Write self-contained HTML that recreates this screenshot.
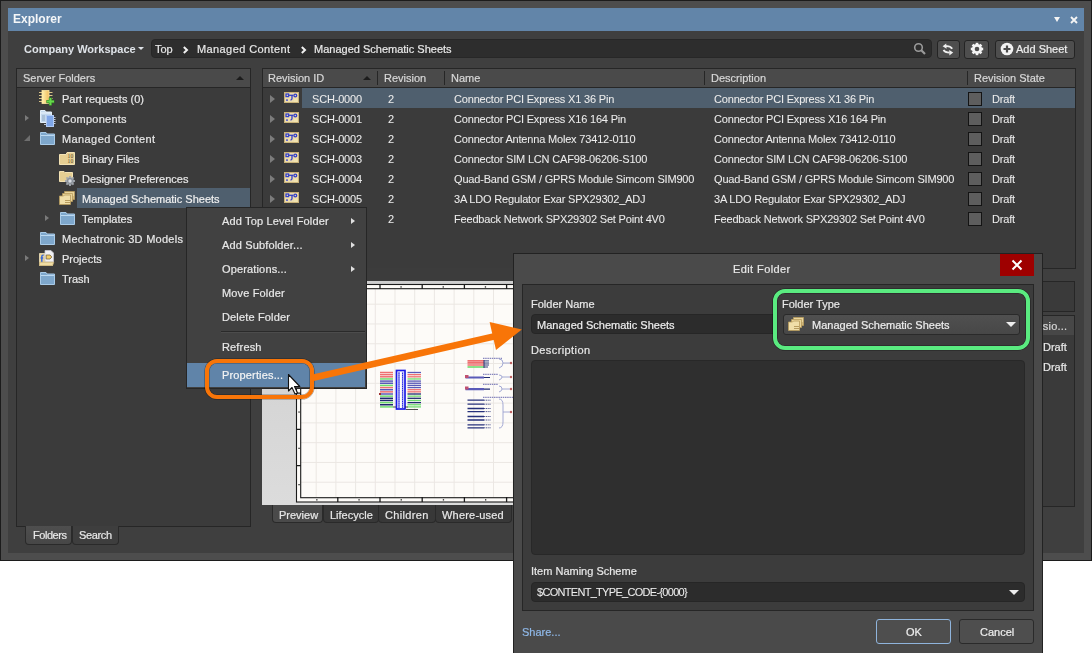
<!DOCTYPE html>
<html><head><meta charset="utf-8">
<style>
*{box-sizing:border-box;margin:0;padding:0}
html,body{width:1092px;height:653px;overflow:hidden;background:#fff;font-family:"Liberation Sans",sans-serif;position:relative}
.a{position:absolute}
.t{position:absolute;white-space:nowrap;color:#e8e8e8;font-size:11px;line-height:14px;-webkit-text-stroke:0.2px currentColor;will-change:transform}
.n{letter-spacing:-0.18px;-webkit-text-stroke:0.05px currentColor;color:#ececec}
#win{left:0;top:0;width:1092px;height:561px;background:#4d4d4d;border:1px solid #1c1c1c}
#title{left:8px;top:8px;width:1076px;height:23px;background:#6285a9}
#content{left:8px;top:31px;width:1076px;height:522px;background:#3f3f3f}
.panel{background:#3b3b3b;border:1px solid #262626}
.hdr{background:#4a4a4a;border-bottom:1px solid #262626}
.btn{background:#4e4e4e;border:1px solid #242424;border-radius:3px}
.sep{position:absolute;width:1px;height:14px;background:#262626;top:71px}
.exp{position:absolute;width:0;height:0;border-top:3px solid transparent;border-bottom:3px solid transparent;border-left:4px solid #7a7a7a}
.chk{position:absolute;width:14px;height:14px;background:#5e5e5e;border:1.5px solid #141414}
</style></head><body>
<div id="win" class="a"></div>
<div id="title" class="a"></div>
<div class="t" style="left:13px;top:12px;font-weight:bold;font-size:12px;color:#f4f6f8;-webkit-text-stroke:0">Explorer</div>
<div class="a" style="left:1054px;top:17px;width:0;height:0;border-left:3.5px solid transparent;border-right:3.5px solid transparent;border-top:5px solid #f4f4f4"></div>
<svg class="a" style="left:1069.5px;top:15.5px" width="8" height="8"><path d="M1 1L7 7M7 1L1 7" stroke="#f4f4f4" stroke-width="1.9"/></svg>
<div id="content" class="a"></div>

<!-- toolbar -->
<div class="t" style="left:24px;top:42px;font-weight:bold;color:#dfe3e8;-webkit-text-stroke:0">Company Workspace</div>
<div class="a" style="left:138px;top:47px;width:0;height:0;border-left:3px solid transparent;border-right:3px solid transparent;border-top:3px solid #dfe3e8"></div>
<div class="a" style="left:151px;top:39px;width:781px;height:19px;background:#2d2d2d;border:1px solid #272727;border-radius:4px"></div>
<div class="t" style="left:155px;top:42px">Top</div>
<svg class="a" style="left:182px;top:46px" width="7" height="8"><path d="M1.8 1L5 4L1.8 7" stroke="#f0f0f0" stroke-width="2" fill="none"/></svg>
<div class="t" style="left:197px;top:42px;letter-spacing:0.4px">Managed Content</div>
<svg class="a" style="left:300px;top:46px" width="7" height="8"><path d="M1.8 1L5 4L1.8 7" stroke="#f0f0f0" stroke-width="2" fill="none"/></svg>
<div class="t" style="left:314px;top:42px">Managed Schematic Sheets</div>
<svg class="a" style="left:913px;top:42px" width="14" height="14"><circle cx="5.5" cy="5.5" r="3.8" stroke="#9a9a9a" stroke-width="1.6" fill="none"/><path d="M8.3 8.3L12 12" stroke="#9a9a9a" stroke-width="2.2"/></svg>
<div class="a btn" style="left:937px;top:40px;width:23px;height:19px"></div>
<svg class="a" style="left:941px;top:42px" width="14" height="14"><path d="M4.5 4.2Q9 3.6 11.2 6.8" stroke="#f0f0f0" stroke-width="1.9" fill="none"/><path d="M1.6 4.2L5.2 1.4L5.6 6.8Z" fill="#f0f0f0"/><path d="M2.6 7.8Q3.8 10.4 8.6 10.6" stroke="#f0f0f0" stroke-width="1.9" fill="none"/><path d="M12.2 10.6L8.4 13.4L8.2 8Z" fill="#f0f0f0"/></svg>
<div class="a btn" style="left:964px;top:40px;width:25px;height:19px"></div>
<svg class="a" style="left:970px;top:42px" width="14" height="14"><g fill="#f4f4f4"><circle cx="7" cy="7" r="5.1"/><rect x="5.7" y="0.8" width="2.6" height="12.4" transform="rotate(0 7 7)"/><rect x="5.7" y="0.8" width="2.6" height="12.4" transform="rotate(45 7 7)"/><rect x="5.7" y="0.8" width="2.6" height="12.4" transform="rotate(90 7 7)"/><rect x="5.7" y="0.8" width="2.6" height="12.4" transform="rotate(135 7 7)"/></g><circle cx="7" cy="7" r="2.3" fill="#4e4e4e"/></svg>
<div class="a btn" style="left:995px;top:40px;width:80px;height:19px"></div>
<svg class="a" style="left:1000px;top:42px" width="14" height="14"><circle cx="7" cy="7" r="6.3" fill="#f2f2f2"/><path d="M7 3.5V10.5M3.5 7H10.5" stroke="#4b4b4b" stroke-width="2.2"/></svg>
<div class="t" style="left:1016px;top:42px;color:#eee">Add Sheet</div>

<!-- left panel -->
<div class="a panel" style="left:16px;top:68px;width:235px;height:459px"></div>
<div class="a hdr" style="left:17px;top:69px;width:233px;height:19px"></div>
<div class="t" style="left:23px;top:71px;color:#d8d8d8">Server Folders</div>
<div class="a" style="left:236px;top:76px;width:0;height:0;border-left:4px solid transparent;border-right:4px solid transparent;border-bottom:4px solid #1c1c1c"></div>

<svg width="0" height="0" style="position:absolute">
<defs>
<symbol id="ifold" viewBox="0 0 15 13"><path d="M0.5 0.5H6L7 2H14.5V12.5H0.5Z" fill="#7ea7cc" stroke="#a9cbe8"/><path d="M1 3.5H14" stroke="#bcd8f0"/></symbol>
<symbol id="itan" viewBox="0 0 16 14"><path d="M0.5 2.5H5.5L6.5 1H15.5V13.5H0.5Z" fill="#e6cf93" stroke="#f3e2b4"/></symbol>
<symbol id="ibin" viewBox="0 0 16 14"><path d="M0.5 3.5H7L8 1.5H15.5V13.5H0.5Z" fill="#e6cf93" stroke="#f3e2b4"/><text x="8.6" y="7" font-size="5.6" fill="#5a4828" font-family="Liberation Serif">10</text><text x="8.6" y="12.2" font-size="5.6" fill="#5a4828" font-family="Liberation Serif">10</text></symbol>
<symbol id="ipref" viewBox="0 0 16 16"><path d="M0.5 1.5H5L6 2.5H13.5V11.5H0.5Z" fill="#e6cf93" stroke="#f3e2b4"/><g fill="#a4a9b0"><rect x="10.1" y="6" width="1.8" height="10" transform="rotate(0 11 11)"/><rect x="10.1" y="6" width="1.8" height="10" transform="rotate(45 11 11)"/><rect x="10.1" y="6" width="1.8" height="10" transform="rotate(90 11 11)"/><rect x="10.1" y="6" width="1.8" height="10" transform="rotate(135 11 11)"/><circle cx="11" cy="11" r="3.8"/></g><circle cx="11" cy="11" r="3" fill="#8a9098"/><circle cx="11" cy="11" r="1.7" fill="#d8dce2"/></symbol>
<symbol id="isch" viewBox="0 0 16 14"><path d="M5.5 0.5H15.5V8.5H5.5Z" fill="#ead59c" stroke="#b89c5c" stroke-width="0.8"/><path d="M3.5 2.5H13.5V10.5H3.5Z" fill="#ead59c" stroke="#b89c5c" stroke-width="0.8"/><path d="M0.5 5H4.5L5.5 4H11.5V13.5H0.5Z" fill="#f0dea8" stroke="#b89c5c" stroke-width="0.8"/><path d="M6 9.5H11M6 11.5H11M13.5 6H15M13.5 8H15" stroke="#a88c4c" stroke-width="0.8"/></symbol>
<symbol id="ipart" viewBox="0 0 17 17" overflow="visible"><defs><linearGradient id="pgr" x1="0" x2="1"><stop offset="0" stop-color="#fff2b0"/><stop offset="1" stop-color="#f0bd5c"/></linearGradient></defs><path d="M1 2.5H4M1 5.5H4M1 8.5H4M1 11.5H4M11 2.5H14.5M11 5.5H14.5M11 8.5H14.5M11 11.5H14.5" stroke="#d9c48a" stroke-width="1"/><rect x="4" y="0.5" width="7" height="13" fill="url(#pgr)" stroke="#fde7a0" stroke-width="0.8"/><path d="M12.4 7.6V15.6M8.4 11.6H16.4" stroke="#2f7a20" stroke-width="3.2"/><path d="M12.4 8V15.2M8.8 11.6H16" stroke="#66d84c" stroke-width="2"/></symbol>
<symbol id="icomp" viewBox="0 0 16 17"><path d="M0.5 0.5H5L6 2H11.5V12.5H0.5Z" fill="#c4d9ee" stroke="#e4f0fa"/><path d="M1 3H11" stroke="#eef6fc"/><path d="M2 6H5M2 8H5M2 10H5" stroke="#90a8c0"/><path d="M13.5 7.5H15.5M13.5 9.5H15.5M13.5 11.5H15.5M13.5 13.5H15.5M4 14.5H6.5" stroke="#d0d8e6" stroke-width="0.9"/><rect x="6.5" y="5.5" width="7" height="11" fill="#7fa6e8" stroke="#b0caf4"/></symbol>
<symbol id="iproj" viewBox="0 0 16 16"><path d="M0.5 3.5H13.5V15.5H0.5Z" fill="#e8d39a" stroke="#f2e4bc" stroke-width="0.8"/><path d="M6 0.5H12L14.5 3V12H6Z" fill="#f0f0f4" stroke="#c8c8d0" stroke-width="0.8"/><path d="M7.2 5H11L12.8 7L11 9H7.2Z" fill="#f2cf6a" stroke="#7a6440" stroke-width="0.8"/><path d="M4.6 5.2Q2.8 4.8 2.8 7V12.5M1.6 8H4.2" stroke="#3a68d8" stroke-width="1.5" fill="none"/><path d="M0.5 12.2H14.8L13.6 15.5H0.5Z" fill="#efdca4" stroke="#c9b27a" stroke-width="0.8"/></symbol>
<symbol id="ischrow" viewBox="0 0 15 11"><rect x="0.5" y="0.5" width="14" height="10" fill="#ecdcae" stroke="#c9b27a"/><g stroke="#3540c8" stroke-width="1.3" fill="none"><rect x="2" y="2" width="2.6" height="2.6"/><path d="M4.6 3.3H9.2"/><circle cx="11.3" cy="3.5" r="1.4"/><path d="M8 3.3V6.5Q8 8 6.5 8"/></g><rect x="2.2" y="7.3" width="1.6" height="1.6" fill="#3540c8"/><path d="M10 7.2H13M10 9H13" stroke="#f4e9b0" stroke-width="1"/></symbol>
</defs></svg>
<div class="a" style="left:77px;top:188px;width:173px;height:20px;background:#4f5f6e"></div>
<svg class="a" style="left:38px;top:90px" width="17" height="17" overflow="visible"><use href="#ipart"/></svg>
<div class="t" style="left:62px;top:92px">Part requests (0)</div>
<div class="exp" style="left:25px;top:115px"></div>
<svg class="a" style="left:40px;top:110px" width="16" height="17"><use href="#icomp"/></svg>
<div class="t" style="left:62px;top:112px;letter-spacing:0.25px">Components</div>
<div class="a" style="left:24px;top:135px;width:0;height:0;border-bottom:6px solid #6e6e6e;border-left:6px solid transparent"></div>
<svg class="a" style="left:40px;top:132px" width="15" height="13"><use href="#ifold"/></svg>
<div class="t" style="left:62px;top:132px;letter-spacing:0.4px">Managed Content</div>
<svg class="a" style="left:59px;top:151px" width="16" height="14"><use href="#ibin"/></svg>
<div class="t" style="left:82px;top:152px">Binary Files</div>
<svg class="a" style="left:59px;top:170px" width="16" height="16"><use href="#ipref"/></svg>
<div class="t" style="left:82px;top:172px">Designer Preferences</div>
<svg class="a" style="left:59px;top:191px" width="16" height="14"><use href="#isch"/></svg>
<div class="t" style="left:82px;top:192px;color:#f0f0f0">Managed Schematic Sheets</div>
<div class="exp" style="left:45px;top:215px"></div>
<svg class="a" style="left:60px;top:212px" width="15" height="13"><use href="#ifold"/></svg>
<div class="t" style="left:82px;top:212px">Templates</div>
<svg class="a" style="left:40px;top:232px" width="15" height="13"><use href="#ifold"/></svg>
<div class="t" style="left:62px;top:232px;letter-spacing:0.27px">Mechatronic 3D Models</div>
<div class="exp" style="left:25px;top:255px"></div>
<svg class="a" style="left:39px;top:250px" width="16" height="16"><use href="#iproj"/></svg>
<div class="t" style="left:62px;top:252px">Projects</div>
<svg class="a" style="left:40px;top:272px" width="15" height="13"><use href="#ifold"/></svg>
<div class="t" style="left:62px;top:272px">Trash</div>
<!-- tabs -->
<div class="a" style="left:25px;top:526px;width:47px;height:19px;background:linear-gradient(#4e4e4e,#474747);border:1px solid #2a2a2a;border-top:none;border-radius:0 0 4px 4px"></div>
<div class="a" style="left:72px;top:526px;width:47px;height:19px;background:#3e3e3e;border:1px solid #2a2a2a;border-top:none;border-radius:0 0 4px 4px"></div>
<div class="t" style="left:32.5px;top:528px;letter-spacing:-0.45px">Folders</div>
<div class="t" style="left:79px;top:528px;letter-spacing:-0.35px">Search</div>

<div class="a panel" style="left:262px;top:68px;width:814px;height:201px"></div>
<div class="a hdr" style="left:263px;top:69px;width:812px;height:19px"></div>
<div class="t" style="left:268px;top:71px;color:#d8d8d8">Revision ID</div>
<div class="a" style="left:363px;top:76px;width:0;height:0;border-left:4px solid transparent;border-right:4px solid transparent;border-bottom:4px solid #1c1c1c"></div>
<div class="sep" style="left:377px"></div>
<div class="t" style="left:384px;top:71px;color:#d8d8d8">Revision</div>
<div class="sep" style="left:444px"></div>
<div class="t" style="left:451px;top:71px;color:#d8d8d8">Name</div>
<div class="sep" style="left:704px"></div>
<div class="t" style="left:711px;top:71px;color:#d8d8d8">Description</div>
<div class="sep" style="left:967px"></div>
<div class="t" style="left:974px;top:71px;color:#d8d8d8">Revision State</div>
<div class="a" style="left:302px;top:88px;width:773px;height:20px;background:#4f5f6e"></div>
<div class="exp" style="left:270px;top:95px;border-left-color:#7c7c7c;border-top-width:4px;border-bottom-width:4px;border-left-width:5px"></div><svg class="a" style="left:284px;top:92px" width="15" height="11"><use href="#ischrow"/></svg><div class="t n" style="left:312px;top:92px">SCH-0000</div><div class="t n" style="left:388px;top:92px">2</div><div class="t n" style="left:454px;top:92px">Connector PCI Express X1 36 Pin</div><div class="t n" style="left:714px;top:92px">Connector PCI Express X1 36 Pin</div><div class="chk" style="left:968px;top:92px"></div><div class="t n" style="left:992px;top:92px">Draft</div>
<div class="exp" style="left:270px;top:115px;border-left-color:#7c7c7c;border-top-width:4px;border-bottom-width:4px;border-left-width:5px"></div><svg class="a" style="left:284px;top:112px" width="15" height="11"><use href="#ischrow"/></svg><div class="t n" style="left:312px;top:112px">SCH-0001</div><div class="t n" style="left:388px;top:112px">2</div><div class="t n" style="left:454px;top:112px">Connector PCI Express X16 164 Pin</div><div class="t n" style="left:714px;top:112px">Connector PCI Express X16 164 Pin</div><div class="chk" style="left:968px;top:112px"></div><div class="t n" style="left:992px;top:112px">Draft</div>
<div class="exp" style="left:270px;top:135px;border-left-color:#7c7c7c;border-top-width:4px;border-bottom-width:4px;border-left-width:5px"></div><svg class="a" style="left:284px;top:132px" width="15" height="11"><use href="#ischrow"/></svg><div class="t n" style="left:312px;top:132px">SCH-0002</div><div class="t n" style="left:388px;top:132px">2</div><div class="t n" style="left:454px;top:132px">Connector Antenna Molex 73412-0110</div><div class="t n" style="left:714px;top:132px">Connector Antenna Molex 73412-0110</div><div class="chk" style="left:968px;top:132px"></div><div class="t n" style="left:992px;top:132px">Draft</div>
<div class="exp" style="left:270px;top:155px;border-left-color:#7c7c7c;border-top-width:4px;border-bottom-width:4px;border-left-width:5px"></div><svg class="a" style="left:284px;top:152px" width="15" height="11"><use href="#ischrow"/></svg><div class="t n" style="left:312px;top:152px">SCH-0003</div><div class="t n" style="left:388px;top:152px">2</div><div class="t n" style="left:454px;top:152px">Connector SIM LCN CAF98-06206-S100</div><div class="t n" style="left:714px;top:152px">Connector SIM LCN CAF98-06206-S100</div><div class="chk" style="left:968px;top:152px"></div><div class="t n" style="left:992px;top:152px">Draft</div>
<div class="exp" style="left:270px;top:175px;border-left-color:#7c7c7c;border-top-width:4px;border-bottom-width:4px;border-left-width:5px"></div><svg class="a" style="left:284px;top:172px" width="15" height="11"><use href="#ischrow"/></svg><div class="t n" style="left:312px;top:172px">SCH-0004</div><div class="t n" style="left:388px;top:172px">2</div><div class="t n" style="left:454px;top:172px">Quad-Band GSM / GPRS Module Simcom SIM900</div><div class="t n" style="left:714px;top:172px">Quad-Band GSM / GPRS Module Simcom SIM900</div><div class="chk" style="left:968px;top:172px"></div><div class="t n" style="left:992px;top:172px">Draft</div>
<div class="exp" style="left:270px;top:195px;border-left-color:#7c7c7c;border-top-width:4px;border-bottom-width:4px;border-left-width:5px"></div><svg class="a" style="left:284px;top:192px" width="15" height="11"><use href="#ischrow"/></svg><div class="t n" style="left:312px;top:192px">SCH-0005</div><div class="t n" style="left:388px;top:192px">2</div><div class="t n" style="left:454px;top:192px">3A LDO Regulator Exar SPX29302_ADJ</div><div class="t n" style="left:714px;top:192px">3A LDO Regulator Exar SPX29302_ADJ</div><div class="chk" style="left:968px;top:192px"></div><div class="t n" style="left:992px;top:192px">Draft</div>
<div class="exp" style="left:270px;top:215px;border-left-color:#7c7c7c;border-top-width:4px;border-bottom-width:4px;border-left-width:5px"></div><svg class="a" style="left:284px;top:212px" width="15" height="11"><use href="#ischrow"/></svg><div class="t n" style="left:312px;top:212px">SCH-0006</div><div class="t n" style="left:388px;top:212px">2</div><div class="t n" style="left:454px;top:212px">Feedback Network SPX29302 Set Point 4V0</div><div class="t n" style="left:714px;top:212px">Feedback Network SPX29302 Set Point 4V0</div><div class="chk" style="left:968px;top:212px"></div><div class="t n" style="left:992px;top:212px">Draft</div>
<svg id="prev" class="a" style="left:262px;top:268px" width="460" height="237" viewBox="0 0 460 237"><defs><linearGradient id="pg" x1="0" y1="0" x2="0" y2="1"><stop offset="0" stop-color="#cecece"/><stop offset="1" stop-color="#dcdcdc"/></linearGradient></defs><rect x="0" y="0" width="460" height="13" fill="#3c3c3c"/><rect x="0" y="13" width="460" height="224" fill="url(#pg)"/><rect x="34.5" y="16.5" width="600" height="217.5" fill="#fdfbf8" stroke="#1a1a1a" stroke-width="1.1"/><path d="M54.2 21V229 M73.9 21V229 M93.6 21V229 M113.3 21V229 M133.0 21V229 M152.7 21V229 M172.4 21V229 M192.1 21V229 M211.8 21V229 M231.5 21V229 M251.2 21V229 M270.9 21V229 M290.6 21V229 M310.3 21V229 M330.0 21V229 M349.7 21V229 M369.4 21V229 M389.1 21V229 M408.8 21V229 M428.5 21V229 M448.2 21V229 M39 36.2H460 M39 55.98H460 M39 75.76H460 M39 95.54H460 M39 115.32H460 M39 135.1H460 M39 154.88H460 M39 174.66H460 M39 194.44H460 M39 214.22H460" stroke="#ebe7e3" stroke-width="1" fill="none"/><rect x="38.7" y="20.7" width="600" height="209.0" fill="none" stroke="#1a1a1a" stroke-width="1.1"/><path d="M75.8 17V21M75.8 229V234 M118.0 17V21M118.0 229V234 M160.2 17V21M160.2 229V234 M202.4 17V21M202.4 229V234 M244.6 17V21M244.6 229V234 M286.8 17V21M286.8 229V234 M329.0 17V21M329.0 229V234 M371.2 17V21M371.2 229V234 M413.4 17V21M413.4 229V234 M455.6 17V21M455.6 229V234 M497.8 17V21M497.8 229V234 M540.0 17V21M540.0 229V234 M582.2 17V21M582.2 229V234 M35 52.5H39 M35 88.8H39 M35 125.1H39 M35 161.4H39 M35 197.7H39" stroke="#1a1a1a" stroke-width="1.3"/><rect x="54.0" y="18.3" width="1.3" height="1.3" fill="#222"/><rect x="96.2" y="18.3" width="1.3" height="1.3" fill="#222"/><rect x="138.4" y="18.3" width="1.3" height="1.3" fill="#222"/><rect x="54.199999999999996" y="231.2" width="1.3" height="1.3" fill="#222"/><rect x="180.6" y="18.3" width="1.3" height="1.3" fill="#222"/><rect x="96.4" y="231.2" width="1.3" height="1.3" fill="#222"/><rect x="222.8" y="18.3" width="1.3" height="1.3" fill="#222"/><rect x="138.6" y="231.2" width="1.3" height="1.3" fill="#222"/><rect x="265.0" y="18.3" width="1.3" height="1.3" fill="#222"/><rect x="180.8" y="231.2" width="1.3" height="1.3" fill="#222"/><rect x="307.2" y="18.3" width="1.3" height="1.3" fill="#222"/><rect x="223.0" y="231.2" width="1.3" height="1.3" fill="#222"/><rect x="349.4" y="18.3" width="1.3" height="1.3" fill="#222"/><rect x="265.2" y="231.2" width="1.3" height="1.3" fill="#222"/><rect x="391.59999999999997" y="18.3" width="1.3" height="1.3" fill="#222"/><rect x="307.4" y="231.2" width="1.3" height="1.3" fill="#222"/><rect x="433.79999999999995" y="18.3" width="1.3" height="1.3" fill="#222"/><rect x="349.59999999999997" y="231.2" width="1.3" height="1.3" fill="#222"/><rect x="476.0" y="18.3" width="1.3" height="1.3" fill="#222"/><rect x="391.79999999999995" y="231.2" width="1.3" height="1.3" fill="#222"/><rect x="518.1999999999999" y="18.3" width="1.3" height="1.3" fill="#222"/><rect x="434.0" y="231.2" width="1.3" height="1.3" fill="#222"/><rect x="560.4" y="18.3" width="1.3" height="1.3" fill="#222"/><rect x="476.2" y="231.2" width="1.3" height="1.3" fill="#222"/><rect x="602.6" y="18.3" width="1.3" height="1.3" fill="#222"/><rect x="518.4" y="231.2" width="1.3" height="1.3" fill="#222"/><rect x="36.4" y="34.5" width="1.3" height="1.3" fill="#222"/><rect x="36.4" y="70.80000000000001" width="1.3" height="1.3" fill="#222"/><rect x="36.4" y="107.10000000000001" width="1.3" height="1.3" fill="#222"/><rect x="36.4" y="143.4" width="1.3" height="1.3" fill="#222"/><rect x="36.4" y="179.70000000000002" width="1.3" height="1.3" fill="#222"/><rect x="36.4" y="216.0" width="1.3" height="1.3" fill="#222"/><path d="M118 104.5H131" stroke="#ee7070" stroke-width="1.5"/><path d="M145.5 104.5H159" stroke="#5a5ab8" stroke-width="1.3"/><path d="M118 106.65H131" stroke="#ee7070" stroke-width="1.5"/><path d="M145.5 106.65H159" stroke="#ee7070" stroke-width="1.3"/><path d="M118 108.8H131" stroke="#ee7070" stroke-width="1.5"/><path d="M145.5 108.8H159" stroke="#ee7070" stroke-width="1.3"/><path d="M118 110.95H131" stroke="#6fdc6f" stroke-width="1.5"/><path d="M145.5 110.95H159" stroke="#6fdc6f" stroke-width="1.3"/><path d="M118 113.1H131" stroke="#5a5ab8" stroke-width="1.5"/><path d="M145.5 113.1H159" stroke="#5a5ab8" stroke-width="1.3"/><path d="M118 115.25H131" stroke="#5a5ab8" stroke-width="1.5"/><path d="M145.5 115.25H159" stroke="#5a5ab8" stroke-width="1.3"/><path d="M118 117.4H131" stroke="#6fdc6f" stroke-width="1.5"/><path d="M145.5 117.4H159" stroke="#5a5ab8" stroke-width="1.3"/><path d="M118 119.55H131" stroke="#ee7070" stroke-width="1.5"/><path d="M145.5 119.55H159" stroke="#5a5ab8" stroke-width="1.3"/><path d="M118 121.7H131" stroke="#5a5ab8" stroke-width="1.5"/><path d="M145.5 121.7H159" stroke="#ee7070" stroke-width="1.3"/><path d="M118 123.85H131" stroke="#ee7070" stroke-width="1.5"/><path d="M145.5 123.85H159" stroke="#ee7070" stroke-width="1.3"/><path d="M118 126.0H131" stroke="#5a5ab8" stroke-width="1.5"/><path d="M145.5 126.0H159" stroke="#1e2a70" stroke-width="1.3"/><path d="M118 128.15H131" stroke="#6fdc6f" stroke-width="1.5"/><path d="M145.5 128.15H159" stroke="#6fdc6f" stroke-width="1.3"/><path d="M118 130.3H131" stroke="#1e2a70" stroke-width="1.5"/><path d="M145.5 130.3H159" stroke="#1e2a70" stroke-width="1.3"/><path d="M118 132.45H131" stroke="#1e2a70" stroke-width="1.5"/><path d="M145.5 132.45H159" stroke="#6fdc6f" stroke-width="1.3"/><path d="M118 134.6H131" stroke="#6fdc6f" stroke-width="1.5"/><path d="M145.5 134.6H159" stroke="#1e2a70" stroke-width="1.3"/><path d="M118 136.75H131" stroke="#1e2a70" stroke-width="1.5"/><path d="M145.5 136.75H159" stroke="#6fdc6f" stroke-width="1.3"/><path d="M118 138.9H131" stroke="#6fdc6f" stroke-width="1.5"/><path d="M145.5 138.9H159" stroke="#6fdc6f" stroke-width="1.3"/><rect x="134.5" y="102.5" width="8.5" height="38.5" fill="#ffffff" stroke="#1a1ae6" stroke-width="1.7"/><path d="M137 104V140M140.6 104V140" stroke="#2a2ae0" stroke-width="1.3"/><path d="M137 104V140M140.6 104V140" stroke="#e0e0ff" stroke-width="0.7" stroke-dasharray="0.9 1.25"/><path d="M131 139H134M143 139H146M144 141.5H156" stroke="#222" stroke-width="0.8"/><rect x="117" y="125" width="2" height="2" fill="#a03030"/><path d="M205.5 92.9H222M205.5 94.9H222M205.5 97H222" stroke="#ee7070" stroke-width="1.6"/><path d="M205.5 99H222" stroke="#6fdc6f" stroke-width="1.6"/><path d="M222 92.9H227M222 95H227M222 97H227M222 99H226M222 92V100" stroke="#1e2a70" stroke-width="0.9"/><path d="M221 90.3H240M221 106.3H236M221 116.3H236M221 129.3H251" stroke="#2a2a90" stroke-width="0.7" stroke-dasharray="1.5 0.7"/><path d="M237 91Q241 91 241 95Q241 99 237 100M241 95H249" stroke="#9aa0d0" stroke-width="0.9" fill="none"/><path d="M237 107Q240 107 240 109Q240 111 237 112M240 109H249" stroke="#9aa0d0" stroke-width="0.9" fill="none"/><path d="M237 118Q240 118 240 121Q240 123 237 124M240 121H249" stroke="#9aa0d0" stroke-width="0.9" fill="none"/><path d="M237 131Q241 131 241 137V144H249M241 144V154Q241 160 237 160" stroke="#9aa0d0" stroke-width="0.9" fill="none"/><g fill="#c06060"><circle cx="249" cy="95" r="1.2"/><circle cx="249" cy="109" r="1.2"/><circle cx="249" cy="121" r="1.2"/><circle cx="249" cy="144" r="1.2"/></g><path d="M203.5 109.5H222M203.5 121.2H222" stroke="#5a5ab8" stroke-width="2.2"/><path d="M222 109.5H228M222 121.2H228" stroke="#1e2a70" stroke-width="1.2"/><rect x="203" y="107" width="3.5" height="3" fill="#c05070"/><rect x="203" y="118.5" width="3.5" height="3" fill="#c05070"/><path d="M205.5 132.2H222 M205.5 136.2H222 M205.5 140.5H222 M205.5 143.6H222 M205.5 148.5H222 M205.5 152H222 M205.5 156.8H222 M205.5 159.8H222" stroke="#26307a" stroke-width="1.3"/><path d="M222 132.2H229 M222 136.2H229 M222 140.5H229 M222 143.6H229 M222 148.5H229 M222 152H229 M222 156.8H229 M222 159.8H229" stroke="#26307a" stroke-width="0.8" stroke-dasharray="1.2 0.6"/></svg>
<div class="a panel" style="left:800px;top:281px;width:275px;height:31px;background:#3a3a3a"></div>
<div class="a panel" style="left:800px;top:315px;width:275px;height:192px;background:#3a3a3a"></div>
<div class="a" style="left:801px;top:316px;width:273px;height:19px;background:#474747"></div>
<div class="t" style="left:1020px;top:319px;color:#d8d8d8;letter-spacing:0.2px">Revisio...</div>
<div class="t" style="left:1043px;top:340px">Draft</div>
<div class="t" style="left:1043px;top:360px">Draft</div>
<!-- preview tabs -->
<div class="a" style="left:272px;top:505px;width:51px;height:18px;background:#4a4a4a;border:1px solid #2a2a2a;border-top:none;border-radius:0 0 4px 4px"></div>
<div class="a" style="left:323px;top:505px;width:56px;height:18px;background:#383838;border:1px solid #2a2a2a;border-top:none;border-radius:0 0 4px 4px"></div>
<div class="a" style="left:378px;top:505px;width:58px;height:18px;background:#383838;border:1px solid #2a2a2a;border-top:none;border-radius:0 0 4px 4px"></div>
<div class="a" style="left:435px;top:505px;width:77px;height:18px;background:#383838;border:1px solid #2a2a2a;border-top:none;border-radius:0 0 4px 4px"></div>
<div class="t" style="left:279px;top:508px">Preview</div>
<div class="t" style="left:330px;top:508px">Lifecycle</div>
<div class="t" style="left:385px;top:508px;letter-spacing:0.35px">Children</div>
<div class="t" style="left:442px;top:508px;letter-spacing:0.2px">Where-used</div>

<div class="a" style="left:186px;top:207px;width:181px;height:182px;background:#414141;border:1px solid #262626"></div>
<div class="t" style="left:222px;top:214px;letter-spacing:0.15px">Add Top Level Folder</div>
<div class="t" style="left:222px;top:238px;letter-spacing:0.15px">Add Subfolder...</div>
<div class="t" style="left:222px;top:262px;letter-spacing:0.15px">Operations...</div>
<div class="t" style="left:222px;top:286px;letter-spacing:0.15px">Move Folder</div>
<div class="t" style="left:222px;top:310px;letter-spacing:0.15px">Delete Folder</div>
<div class="a" style="left:221px;top:331px;width:144px;height:1px;background:#2a2a2a"></div>
<div class="a" style="left:221px;top:332px;width:144px;height:1px;background:#4c4c4c"></div>
<div class="t" style="left:222px;top:340px;letter-spacing:0.15px">Refresh</div>
<div class="a" style="left:187px;top:362.5px;width:178px;height:24.5px;background:#6084a9"></div>
<div class="t" style="left:222px;top:368px;letter-spacing:0.15px;color:#f4f4f4">Properties...</div>
<div class="a" style="left:351px;top:218px;width:0;height:0;border-top:3.5px solid transparent;border-bottom:3.5px solid transparent;border-left:4px solid #e0e0e0"></div>
<div class="a" style="left:351px;top:242px;width:0;height:0;border-top:3.5px solid transparent;border-bottom:3.5px solid transparent;border-left:4px solid #e0e0e0"></div>
<div class="a" style="left:351px;top:266px;width:0;height:0;border-top:3.5px solid transparent;border-bottom:3.5px solid transparent;border-left:4px solid #e0e0e0"></div>
<!-- cursor -->
<svg class="a" style="left:287px;top:372.5px" width="14" height="23"><path d="M1.5 1.5V18L5 14.5L8 21L10.5 20L7.5 13.5H12.8Z" fill="#fff" stroke="#111" stroke-width="1.1" stroke-linejoin="round"/></svg>
<!-- orange callout -->
<div class="a" style="left:205px;top:359px;width:109px;height:40px;border:4.5px solid #f87508;border-radius:12px;box-shadow:0 0 0 0.6px rgba(0,0,0,0.4),inset 0 0 0 0.6px rgba(0,0,0,0.4)"></div>

<div class="a" style="left:513px;top:253px;width:530px;height:401px;background:#4a4a4a;border:1px solid #222"></div>
<div class="t" style="left:733px;top:261.5px;color:#e8e8e8;letter-spacing:0.4px">Edit Folder</div>
<div class="a" style="left:1000px;top:254px;width:34px;height:22px;background:#9e0000"></div>
<svg class="a" style="left:1011px;top:259px" width="12" height="12"><path d="M1.5 1.5L10.5 10.5M10.5 1.5L1.5 10.5" stroke="#fff" stroke-width="2"/></svg>
<div class="a" style="left:522px;top:284px;width:512px;height:327px;background:#3c3c3c;border:1px solid #262626"></div>
<div class="t" style="left:531px;top:297px">Folder Name</div>
<div class="a" style="left:531px;top:314px;width:250px;height:20px;background:#2c2c2c;border:1px solid #262626;border-radius:4px"></div>
<div class="t" style="left:537px;top:318px;color:#eee">Managed Schematic Sheets</div>
<div class="t" style="left:531px;top:343px;letter-spacing:0.4px">Description</div>
<div class="a" style="left:531px;top:360px;width:494px;height:195px;background:#2f2f2f;border:1px solid #282828;border-radius:4px"></div>
<div class="t" style="left:531px;top:564px">Item Naming Scheme</div>
<div class="a" style="left:531px;top:582px;width:494px;height:20px;background:#2c2c2c;border:1px solid #262626;border-radius:4px"></div>
<div class="t n" style="left:537px;top:585px;color:#eee;letter-spacing:-0.7px">$CONTENT_TYPE_CODE-{0000}</div>
<div class="a" style="left:1009px;top:590px;width:0;height:0;border-left:5px solid transparent;border-right:5px solid transparent;border-top:5px solid #eee"></div>
<!-- folder type (green) -->
<div class="a" style="left:773px;top:289px;width:257px;height:61px;background:#3c3c3c;border:4px solid #5aeb80;border-radius:12px;box-shadow:0 0 0 0.6px rgba(0,0,0,0.45),inset 0 0 0 0.6px rgba(0,0,0,0.45)"></div>
<div class="t" style="left:782px;top:297px">Folder Type</div>
<div class="a" style="left:783px;top:314px;width:237px;height:21px;background:linear-gradient(#505050,#474747);border:1px solid #2a2a2a;border-radius:3px"></div>
<svg class="a" style="left:788px;top:317px" width="16" height="14"><use href="#isch"/></svg>
<div class="t" style="left:812px;top:318px;color:#eee">Managed Schematic Sheets</div>
<div class="a" style="left:1006px;top:322px;width:0;height:0;border-left:5px solid transparent;border-right:5px solid transparent;border-top:5px solid #eee"></div>
<!-- bottom -->
<div class="t" style="left:522px;top:625px;color:#8fb8e8">Share...</div>
<div class="a" style="left:876px;top:619px;width:75px;height:25px;background:#4e4e4e;border:1px solid #8fb4dc;border-radius:3px"></div>
<div class="t" style="left:906px;top:625px;color:#eee">OK</div>
<div class="a" style="left:959px;top:619px;width:75px;height:25px;background:#4e4e4e;border:1px solid #2a2a2a;border-radius:3px"></div>
<div class="t" style="left:980px;top:625px;color:#eee">Cancel</div>
<!-- arrow on top -->
<svg class="a" style="left:300px;top:300px" width="230" height="100"><path d="M10 79L495 36" transform="translate(-300 0)" stroke="none"/><path d="M12 78L196 36" stroke="#f87508" stroke-width="6.5" fill="none"/><path d="M189.6 22L196 50L221.8 29.4Z" fill="#f87508"/></svg>





</body></html>
